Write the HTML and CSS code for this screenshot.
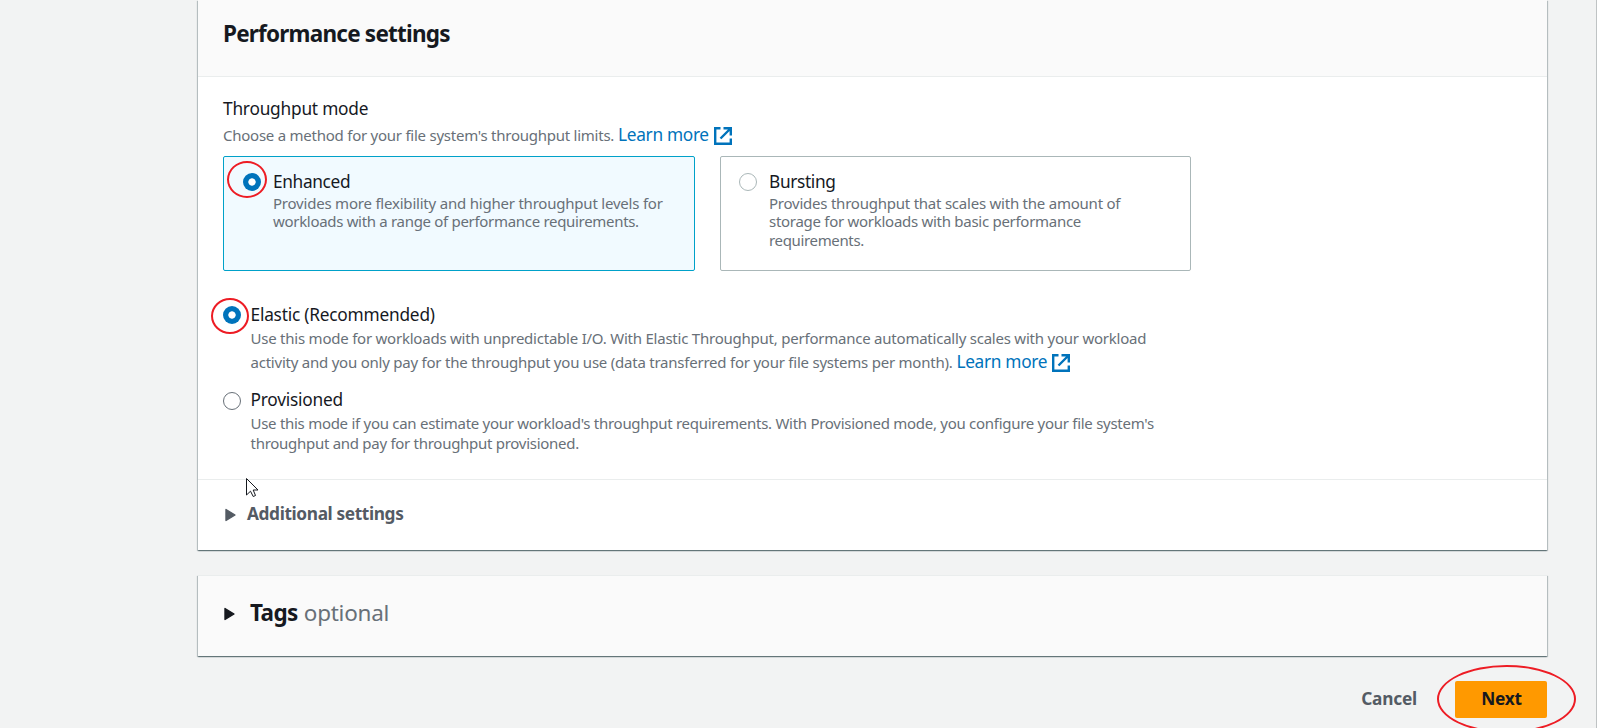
FILE: index.html
```html
<!DOCTYPE html>
<html lang="en">
<head>
<meta charset="utf-8">
<title>Performance settings</title>
<link rel="stylesheet" href="styles.css">
</head>
<body>
<svg class="defs" width="0" height="0"><symbol id="external" viewBox="0 0 18 18"><path d="M6.5 1.2H1.2v15.6h15.6V11.5M9.5 1.2h7.3v7.3M16 2L6.5 11.5" fill="none" stroke="currentColor" stroke-width="2.4"/></symbol></svg>
<main class="page">
  <section class="panel">
    <header class="panel-header"><h2 class="title">Performance settings</h2></header>
    <div class="panel-body">
      <h3 class="label mode-label">Throughput mode</h3>
      <p class="desc mode-desc"><span class="t-choose">Choose a method for your file system's throughput limits.</span> <a class="link">Learn more</a><svg class="ext"><use href="#external"/></svg></p>
      <div class="tiles">
        <div class="tile selected">
          <span class="radio checked"></span>
          <div><div class="label t-enhanced">Enhanced</div><p class="desc tile-desc"><span class="t-e1">Provides more flexibility and higher throughput levels for</span><br><span class="t-e2">workloads with a range of performance requirements.</span></p></div>
          <span class="mark mark-tile"></span>
        </div>
        <div class="tile">
          <span class="radio"></span>
          <div><div class="label t-bursting">Bursting</div><p class="desc tile-desc"><span class="t-b1">Provides throughput that scales with the amount of</span><br><span class="t-b2">storage for workloads with basic performance</span><br><span class="t-b3">requirements.</span></p></div>
        </div>
      </div>
      <div class="option elastic">
        <span class="radio checked"></span>
        <div><div class="label t-elastic">Elastic (Recommended)</div><p class="desc elastic-desc"><span class="t-l1">Use this mode for workloads with unpredictable I/O. With Elastic Throughput, performance automatically scales with your workload</span><br><span class="t-l2">activity and you only pay for the throughput you use (data transferred for your file systems per month).</span> <a class="link">Learn more</a><svg class="ext"><use href="#external"/></svg></p></div>
        <span class="mark mark-option"></span>
      </div>
      <div class="option provisioned">
        <span class="radio dark"></span>
        <div><div class="label t-prov">Provisioned</div><p class="desc prov-desc"><span class="t-p1">Use this mode if you can estimate your workload's throughput requirements. With Provisioned mode, you configure your file system's</span><br><span class="t-p2">throughput and pay for throughput provisioned.</span></p></div>
      </div>
    </div>
    <div class="additional"><svg class="caret" viewBox="0 0 11 14"><path d="M1 1.5L10 7L1 12.5Z" fill="currentColor" stroke="currentColor" stroke-width="1.4" stroke-linejoin="round"/></svg><span class="t-add">Additional settings</span></div>
  </section>
  <section class="panel tags"><svg class="caret" viewBox="0 0 11 14"><path d="M1 1.5L10 7L1 12.5Z" fill="currentColor" stroke="currentColor" stroke-width="1.4" stroke-linejoin="round"/></svg><h2 class="title t-tags">Tags</h2><span class="optional">optional</span></section>
  <footer class="actions"><button class="cancel">Cancel</button><button class="next">Next<span class="mark mark-next"></span></button></footer>
  <svg class="cursor" viewBox="0 0 13 20"><path d="M.5.5V17L4.5 13.2L7.2 18.5L9.5 17.5L7.2 12H12Z" fill="#fff" stroke="#16191f"/></svg>
</main>
</body>
</html>
```
FILE: styles.css
```css
* { box-sizing: border-box; }
body { margin: 0; height: 728px; overflow: hidden; background: #fff; font-family: "Noto Sans", sans-serif; color: #16191f; }
h2, h3, p { margin: 0; }
.defs { position: absolute; }
.page { position: relative; width: 1597px; height: 728px; overflow: hidden; padding: 0 49px 0 198px; background: #f2f3f3; border-right: 1px solid #bfc3c4; }
.panel { width: 1349px; background: #fff; box-shadow: 0 1px 1px 0 rgba(0,28,36,.35), 1px 1px 1px 0 rgba(0,28,36,.2), -1px 1px 1px 0 rgba(0,28,36,.2); }
.panel-header { height: 77px; padding: 18px 25px 0; background: #fafafa; border-bottom: 1px solid #eaeded; }
.title { font-size: 22.5px; line-height: 32px; font-weight: 700; white-space: nowrap; letter-spacing: -.78px; }
.panel-body { height: 402px; padding: 20px 25px 0; }
.label { font-size: 17.3px; line-height: 24px; font-weight: 400; white-space: nowrap; letter-spacing: -.22px; }
.desc { font-size: 15px; color: #687078; white-space: nowrap; }
.mode-desc { line-height: 28px; height: 35px; }
.link { font-size: 17.3px; color: #0073bb; letter-spacing: -.32px; }
.ext { width: 18px; height: 18px; margin-left: 5px; color: #0073bb; vertical-align: -4px; }
.tiles { display: flex; gap: 25px; }
.tile { position: relative; display: flex; width: 472px; height: 115px; padding: 13px 19px; border: 1px solid #aab7b8; border-radius: 2px; gap: 12px; }
.tile + .tile { width: 471px; padding-left: 18px; }
.tile.selected { background: #f1faff; border-color: #00a1c9; }
.tile-desc { line-height: 18.4px; }
.radio { flex: none; width: 18px; height: 18px; margin-top: 3px; border: 1.5px solid #aab7b8; border-radius: 50%; background: #fff; }
.radio.checked { border: none; background: radial-gradient(circle at center, #fff 3.3px, #0073bb 4px); }
.radio.dark { border-color: #687078; }
.option { position: relative; display: flex; gap: 10px; }
.option .radio { margin-left: -.5px; }
.elastic { margin-top: 32px; height: 85px; }
.elastic-desc { line-height: 24px; margin-top: -1px; }
.prov-desc { line-height: 20px; padding-top: 1px; }
.provisioned .radio { margin-top: 4px; }
.t-choose { letter-spacing: -.245px; }
.t-enhanced, .t-bursting { letter-spacing: -.35px; }
.t-e1 { letter-spacing: -.21px; }
.t-e2 { letter-spacing: -.31px; }
.t-b1 { letter-spacing: -.23px; }
.t-b2 { letter-spacing: -.28px; }
.t-b3 { letter-spacing: -.35px; }
.t-l1, .t-l2 { letter-spacing: -.228px; }
.t-p1, .t-p2 { letter-spacing: -.28px; }
.additional { display: flex; align-items: center; height: 71px; padding-left: 27px; gap: 11px; border-top: 1px solid #eaeded; color: #545b64; font-size: 17.3px; font-weight: 700; }
.t-add { letter-spacing: -.38px; margin-top: -3px; }
.caret { width: 11px; height: 14px; flex: none; }
.tags { display: flex; align-items: center; height: 81px; margin-top: 25px; padding: 0 0 5px 26px; background: #fafafa; border-top: 1px solid #eaeded; }
.tags .title { margin: -2px 0 0 15px; letter-spacing: -.6px; }
.optional { margin: -2px 0 0 6px; color: #687078; font-size: 22.5px; letter-spacing: -.25px; }
.actions { display: flex; justify-content: flex-end; align-items: center; gap: 38px; height: 37px; margin-top: 25px; }
button { border: 0; padding: 0; font: 700 17.3px/24px "Noto Sans", sans-serif; background: none; letter-spacing: -.2px; }
.cancel { color: #545b64; margin-top: -1px; }
.next { position: relative; width: 92px; height: 37px; padding: 0 0 1px 1px; border-radius: 2px; background: #f90; color: #16191f; letter-spacing: -.3px; }
.mark { position: absolute; border: 2px solid #ed1c24; border-radius: 50%; }
.mark-tile { left: 3px; top: 4px; width: 40px; height: 37px; }
.mark-option { left: -12px; top: -5px; width: 38px; height: 36px; }
.mark-next { left: -18px; top: -16px; width: 139px; height: 68px; }
.cursor { position: absolute; left: 246px; top: 478px; width: 13px; height: 20px; }
```
